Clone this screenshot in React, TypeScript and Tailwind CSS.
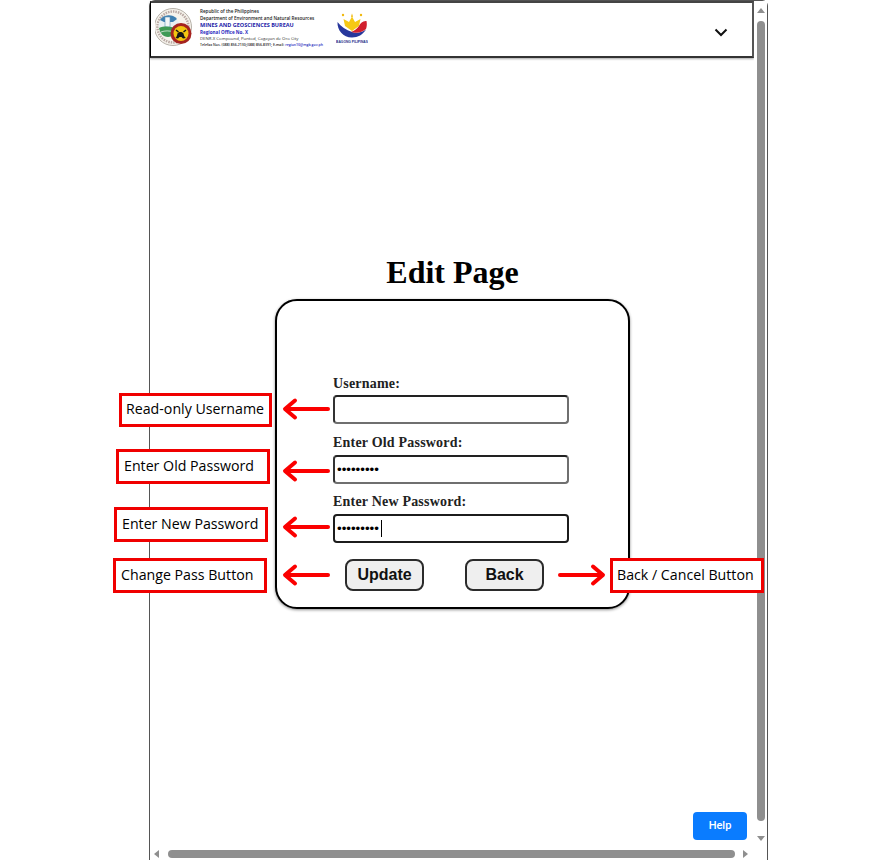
const serif = "font-['Liberation_Serif',serif]";

type NoteProps = {
  text: string;
  className: string;
};

function Note({ text, className }: NoteProps) {
  return (
    <div
      className={`absolute flex items-center whitespace-nowrap border-[3px] border-[#f00000] bg-white pb-[2px] font-['Open_Sans',sans-serif] text-[14.2px] text-black ${className}`}
    >
      {text}
    </div>
  );
}

function Arrow({ className, flip }: { className: string; flip?: boolean }) {
  return (
    <svg
      className={`absolute h-[24px] w-[48px] ${flip ? "-scale-x-100" : ""} ${className}`}
      viewBox="0 0 48 24"
      fill="none"
      stroke="#fb0000"
      strokeWidth="4"
      strokeLinecap="round"
      strokeLinejoin="round"
    >
      <path d="M46 12H4" />
      <path d="M13 3.500 3 12l10 8.500" />
    </svg>
  );
}

function Field({
  label,
  value,
  dark,
  caret,
  tight,
}: {
  label: string;
  value?: string;
  dark?: boolean;
  caret?: boolean;
  tight?: boolean;
}) {
  return (
    <div className={`flex flex-col ${tight ? "mb-px" : ""}`}>
      <label
        className={`${serif} block pt-[1px] text-[14px] leading-[17px] font-bold tracking-[0.2px] text-[#222] ${
          tight ? "h-[21px]" : "h-[22px]"
        }`}
      >
        {label}
      </label>
      <div className="relative">
        <input
          type={value ? "password" : "text"}
          defaultValue={value}
          readOnly
          className={`block h-[29px] w-[236px] rounded-[4px] border-2 bg-white px-[2px] font-['Liberation_Sans',sans-serif] text-[13.3px] text-black outline-none ${
            dark ? "border-[#1c1c1c]" : "border-[#6f6f6f] border-t-[#222] border-l-[#333]"
          }`}
        />
        {caret && (
          <span className="absolute top-[6px] left-[48px] h-[17px] w-px bg-black" />
        )}
      </div>
    </div>
  );
}

function FormButton({ children }: { children: string }) {
  return (
    <button className="h-[32px] w-[79px] rounded-[8px] border-2 border-[#2b2b2b] bg-[#efefef] font-['Liberation_Sans',sans-serif] text-[16px] font-bold text-[#111]">
      {children}
    </button>
  );
}

function MgbLogo() {
  return (
    <svg width="38" height="40" viewBox="0 0 38 40" className="shrink-0">
      <circle cx="18" cy="20" r="18.500" fill="#f6f3ec" stroke="#b5b0a8" strokeWidth="1" />
      <circle cx="18" cy="20" r="15.500" fill="none" stroke="#b9a9a4" strokeWidth="2.500" strokeDasharray="1.500 1" />
      <circle cx="14" cy="19" r="10.500" fill="#e9f0f2" />
      <path d="M5 13a10.500 10.500 0 0 1 17-1l-4 3H9z" fill="#3f7fb0" />
      <path d="M10 10h5v10h-5z" fill="#f3f6f7" stroke="#5b93b8" strokeWidth="0.600" />
      <path d="M4 21c5-2 12-2 17 1-1 5-4 8-8 8-5 0-8-4-9-9z" fill="#3f9a55" />
      <path d="M6 25c4-1.500 8-1.500 13 0" fill="none" stroke="#dfeee0" strokeWidth="0.800" />
      <circle cx="26" cy="26.500" r="10.500" fill="#a5231f" />
      <circle cx="26" cy="26.500" r="7.500" fill="#f2c511" />
      <path d="M20.500 31c1-1 1.500-2.500 2-4.500.800-2 5-2 6 0 .500 2 1 3.500 2.500 4.500l-3 .500-1.500-1.500h-2l-1.500 1.500z" fill="#171717" />
      <path d="M21 23l2.500 2M31 23l-2.500 2" stroke="#171717" strokeWidth="1.500" />
    </svg>
  );
}

function BagongLogo() {
  return (
    <svg width="32" height="31" viewBox="0 0 32 31" className="shrink-0">
      <path d="M16 1.500l1 3-1 .800-1-.800z" fill="#f0b90f" />
      <circle cx="7" cy="3" r="1.200" fill="#f0b90f" />
      <circle cx="25" cy="3" r="1.200" fill="#f0b90f" />
      <path d="M16 4.500 19 10l5.500-3-1.500 7-7 5-7-5-1.500-7L13 10z" fill="#f6c915" />
      <path d="M1.500 10C1 18 7 25.500 16 25.500c6 0 11-3 14-8-5 3.500-10 4-14 2.500C10 18 5 14.500 1.500 10z" fill="#27379c" />
      <path d="M30.500 9C27 8.500 24.500 11 23 14c-2 3-5 5-8 6 5 1.500 10 1 15-3 1-2.500 1-5.500.500-8z" fill="#d1202e" />
      <text x="16" y="30.500" textAnchor="middle" fontSize="3.300" fontWeight="700" fill="#1d2f8a" fontFamily="Liberation Sans, sans-serif">
        BAGONG PILIPINAS
      </text>
    </svg>
  );
}

function Header() {
  return (
    <header className="flex h-[57px] shrink-0 items-start border-t-2 border-r-2 border-b-2 border-l border-t-[#444] border-r-[#555] border-b-[#333] bg-white shadow-[0_1px_2px_rgba(0,0,0,0.35)]">
      <div className="mt-[4px] ml-[4px]">
        <MgbLogo />
      </div>
      <div className="mt-[5px] ml-[7px] flex w-[138px] flex-col font-['Open_Sans',sans-serif] whitespace-nowrap text-[#222]">
        <span className="text-[4.6px] leading-[6.5px] font-semibold">Republic of the Philippines</span>
        <span className="text-[4.6px] leading-[7px] font-semibold">Department of Environment and Natural Resources</span>
        <span className="text-[5.5px] leading-[7px] font-bold text-[#1c1ca8]">MINES AND GEOSCIENCES BUREAU</span>
        <span className="text-[4.6px] leading-[6.5px] font-bold text-[#2a2ac0]">Regional Office No. X</span>
        <span className="text-[4.3px] leading-[6.5px] text-[#333]">DENR-X Compound, Puntod, Cagayan de Oro City</span>
        <span className="text-[3.5px] leading-[5.5px] font-semibold">
          Telefax Nos. (088) 856-2130;(088) 856-8391; E-mail: <span className="text-[#2a2ac0]">region10@mgb.gov.ph</span>
        </span>
      </div>
      <div className="mt-[9px] -ml-[2px]">
        <BagongLogo />
      </div>
      <svg className="mt-[25px] mr-[24px] ml-auto" width="14" height="9" viewBox="0 0 14 9" fill="none" stroke="#111" strokeWidth="2">
        <path d="m1.500 1.500 5.500 5.500 5.500-5.500" />
      </svg>
    </header>
  );
}

function VerticalScrollbar() {
  return (
    <div className="flex w-[13px] shrink-0 flex-col items-center bg-white">
      <div className="mt-[7px] h-0 w-0 border-x-[4px] border-b-[5px] border-x-transparent border-b-[#8f8f8f]" />
      <div className="mt-[8px] h-[800px] w-[8px] rounded-full bg-[#8f8f8f]" />
      <div className="mt-[15px] h-0 w-0 border-x-[4px] border-t-[5px] border-x-transparent border-t-[#8f8f8f]" />
    </div>
  );
}

function HorizontalScrollbar() {
  return (
    <div className="flex h-[12px] shrink-0 items-center bg-white pl-[4px]">
      <div className="h-0 w-0 border-y-[4px] border-r-[5px] border-y-transparent border-r-[#8f8f8f]" />
      <div className="ml-[9px] h-[8px] w-[567px] rounded-full bg-[#8f8f8f]" />
      <div className="ml-[8px] h-0 w-0 border-y-[4px] border-l-[5px] border-y-transparent border-l-[#8f8f8f]" />
    </div>
  );
}

export default function App() {
  return (
    <div className="relative h-[860px] w-[882px] overflow-hidden bg-white">
      <div className="ml-[149px] flex h-[860px] w-[619px] flex-col rounded-t-[6px] border-x border-t border-x-[#555] border-t-[#555] bg-white">
        <div className="flex min-h-0 flex-1">
          <div className="flex min-w-0 flex-1 flex-col">
            <Header />
            <main className="flex flex-1 flex-col items-center pt-[196px] pl-[1px]">
              <h1 className={`${serif} text-[32px] leading-[37px] font-bold text-black`}>Edit Page</h1>
              <div className="mt-[8px] flex h-[310px] w-[355px] flex-col rounded-[22px] border-2 border-black bg-white pt-[73px] pl-[56px] shadow-[0_1px_3px_rgba(0,0,0,0.45)]">
                <div className="flex flex-col gap-[8px]">
                  <Field label="Username:" tight />
                  <Field label="Enter Old Password:" value="123456789" />
                  <Field label="Enter New Password:" value="123456789" dark caret />
                </div>
                <div className="mt-[16px] ml-[12px] flex gap-[41px]">
                  <FormButton>Update</FormButton>
                  <FormButton>Back</FormButton>
                </div>
              </div>
            </main>
          </div>
          <VerticalScrollbar />
        </div>
        <HorizontalScrollbar />
      </div>

      <button className="absolute top-[812px] left-[693px] h-[28px] w-[54px] rounded-[4px] bg-[#0a7cff] font-['Roboto',sans-serif] text-[11px] font-medium text-white">
        Help
      </button>

      <Note text="Read-only Username" className="top-[393px] left-[119px] h-[34px] w-[153px] pl-[4px]" />
      <Note text="Enter Old Password" className="top-[449px] left-[116px] h-[35px] w-[154px] pl-[5px]" />
      <Note text="Enter New Password" className="top-[507px] left-[114px] h-[35px] w-[154px] pl-[5px]" />
      <Note text="Change Pass Button" className="top-[558px] left-[113px] h-[35px] w-[154px] pl-[5px]" />
      <Note text="Back / Cancel Button" className="top-[558px] left-[610px] h-[35px] w-[154px] pl-[4px]" />

      <Arrow className="top-[397px] left-[282px]" />
      <Arrow className="top-[459px] left-[282px]" />
      <Arrow className="top-[515px] left-[282px]" />
      <Arrow className="top-[563px] left-[282px]" />
      <Arrow className="top-[563px] left-[558px]" flip />
    </div>
  );
}
